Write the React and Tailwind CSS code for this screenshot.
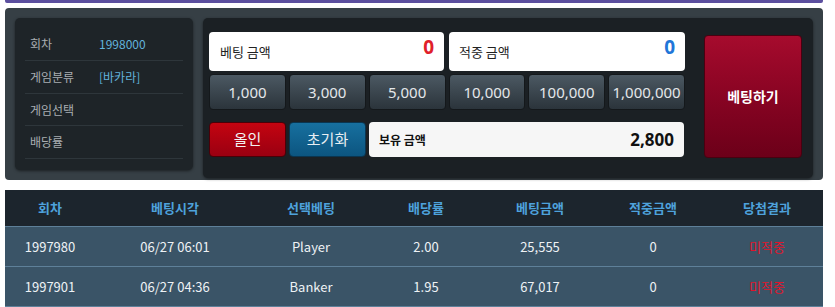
import React from "react";

const font = { fontFamily: '"Noto Sans", "Noto Sans CJK KR", sans-serif' };

const infoRows = [
  { label: "회차", value: "1998000" },
  { label: "게임분류", value: "[바카라]" },
  { label: "게임선택", value: "" },
  { label: "배당률", value: "" },
];

const chips = ["1,000", "3,000", "5,000", "10,000", "100,000", "1,000,000"];

const cols = [
  { title: "회차", w: "w-[90px]" },
  { title: "베팅시각", w: "w-[160px]" },
  { title: "선택베팅", w: "w-[112px]" },
  { title: "배당률", w: "w-[118px]" },
  { title: "베팅금액", w: "w-[110px]" },
  { title: "적중금액", w: "w-[116px]" },
  { title: "당첨결과", w: "w-[112px]" },
];

const rows = [
  ["1997980", "06/27 06:01", "Player", "2.00", "25,555", "0", "미적중"],
  ["1997901", "06/27 04:36", "Banker", "1.95", "67,017", "0", "미적중"],
];

export default function App() {
  return (
    <div
      className="w-[835px] h-[307px] bg-white overflow-hidden"
      style={{ fontFamily: '"Noto Sans CJK KR", "Noto Sans", sans-serif' }}
    >
      <div className="ml-[5px] w-[818px] h-[3px] bg-[#5c4f9f] rounded-b-[2px]" />
      <div className="ml-[5px] mt-[5px] w-[818px] h-[172px] bg-[#363f45] rounded-[4px] flex pt-[10px] pl-[10px] gap-[10px]">
        {/* left info */}
        <div className="w-[178px] h-[152px] bg-[#1e2428] rounded-[5px] px-[10px] pt-[10px] shadow-[0_1px_3px_rgba(0,0,0,0.5)]">
          {infoRows.map((r, i) => (
            <div
              key={i}
              className={`flex items-center border-b border-[#2e363b] ${
                i === 2 ? "h-[32px]" : "h-[33px]"
              } pl-[5px] text-[12px]`}
            >
              <span className="w-[69px] text-[#a9aeb2]">{r.label}</span>
              <span className="text-[#62b3dc]">{r.value}</span>
            </div>
          ))}
        </div>
        {/* right */}
        <div className="w-[610px] h-[160px] bg-[#1b2024] rounded-[5px] pl-[6px] pt-[14px] flex shadow-[0_1px_3px_rgba(0,0,0,0.5)]">
          <div className="w-[476px]">
            <div className="flex gap-[5px] h-[39px]">
              <div className="w-[235px] bg-white rounded-[4px] flex items-center justify-between pl-[11px] pr-[10px]">
                <span className="text-[13px] text-[#222]">베팅 금액</span>
                <span className="text-[19px] font-bold text-[#e0202a] -mt-[8px]" style={font}>0</span>
              </div>
              <div className="w-[236px] bg-white rounded-[4px] flex items-center justify-between pl-[10px] pr-[10px]">
                <span className="text-[13px] text-[#222]">적중 금액</span>
                <span className="text-[19px] font-bold text-[#2176d8] -mt-[8px]" style={font}>0</span>
              </div>
            </div>
            <div className="mt-[3px] grid grid-cols-6 gap-[3px] h-[36px]">
              {chips.map((c) => (
                <div
                  key={c}
                  className="rounded-[4px] border border-[#14181b] bg-gradient-to-b from-[#4c5963] to-[#2b343b] flex items-center justify-center text-[15px] text-[#e4e7ea]"
                  style={font}
                >
                  {c}
                </div>
              ))}
            </div>
            <div className="mt-[12px] h-[35px] flex gap-[3px]">
              <div className="w-[77px] rounded-[4px] border border-[#4a0008] bg-gradient-to-b from-[#c40410] to-[#9a0011] flex items-center justify-center text-[15px] text-[#f2f2f2]">
                올인
              </div>
              <div className="w-[77px] rounded-[4px] border border-[#0a3550] bg-gradient-to-b from-[#17709f] to-[#0c5580] flex items-center justify-center text-[15px] text-[#e8eef2]">
                초기화
              </div>
              <div className="w-[315px] bg-[#f6f6f6] rounded-[4px] flex items-center justify-between pl-[10px] pr-[10px]">
                <span className="text-[12px] font-bold text-[#111]">보유 금액</span>
                <span className="text-[17px] font-bold text-[#111]" style={font}>2,800</span>
              </div>
            </div>
          </div>
          <div className="ml-[19px] mt-[3px] w-[98px] h-[123px] rounded-[4px] bg-gradient-to-b from-[#a60b2d] to-[#6c0019] border border-[#4a0010] flex items-center justify-center text-[14px] font-bold text-white">
            베팅하기
          </div>
        </div>
      </div>
      {/* table */}
      <div className="ml-[5px] mt-[10px] w-[818px]">
        <div className="flex h-[36px] bg-[#1c252d]">
          {cols.map((c) => (
            <div
              key={c.title}
              className={`${c.w} flex items-center justify-center text-[13px] font-bold text-[#4ea2dc]`}
            >
              {c.title}
            </div>
          ))}
        </div>
        {rows.map((r, ri) => (
          <div key={ri} className="flex h-[40px] bg-[#3a5467] border-t border-[#5e8099]">
            {r.map((v, ci) => (
              <div
                key={ci}
                className={`${cols[ci].w} flex items-center justify-center text-[13px] ${
                  ci === 6 ? "text-[#e0142c]" : "text-[#eef2f5]"
                }`}
              >
                {v}
              </div>
            ))}
          </div>
        ))}
        <div className="h-[1px] bg-[#5e8099]" />
      </div>
    </div>
  );
}
